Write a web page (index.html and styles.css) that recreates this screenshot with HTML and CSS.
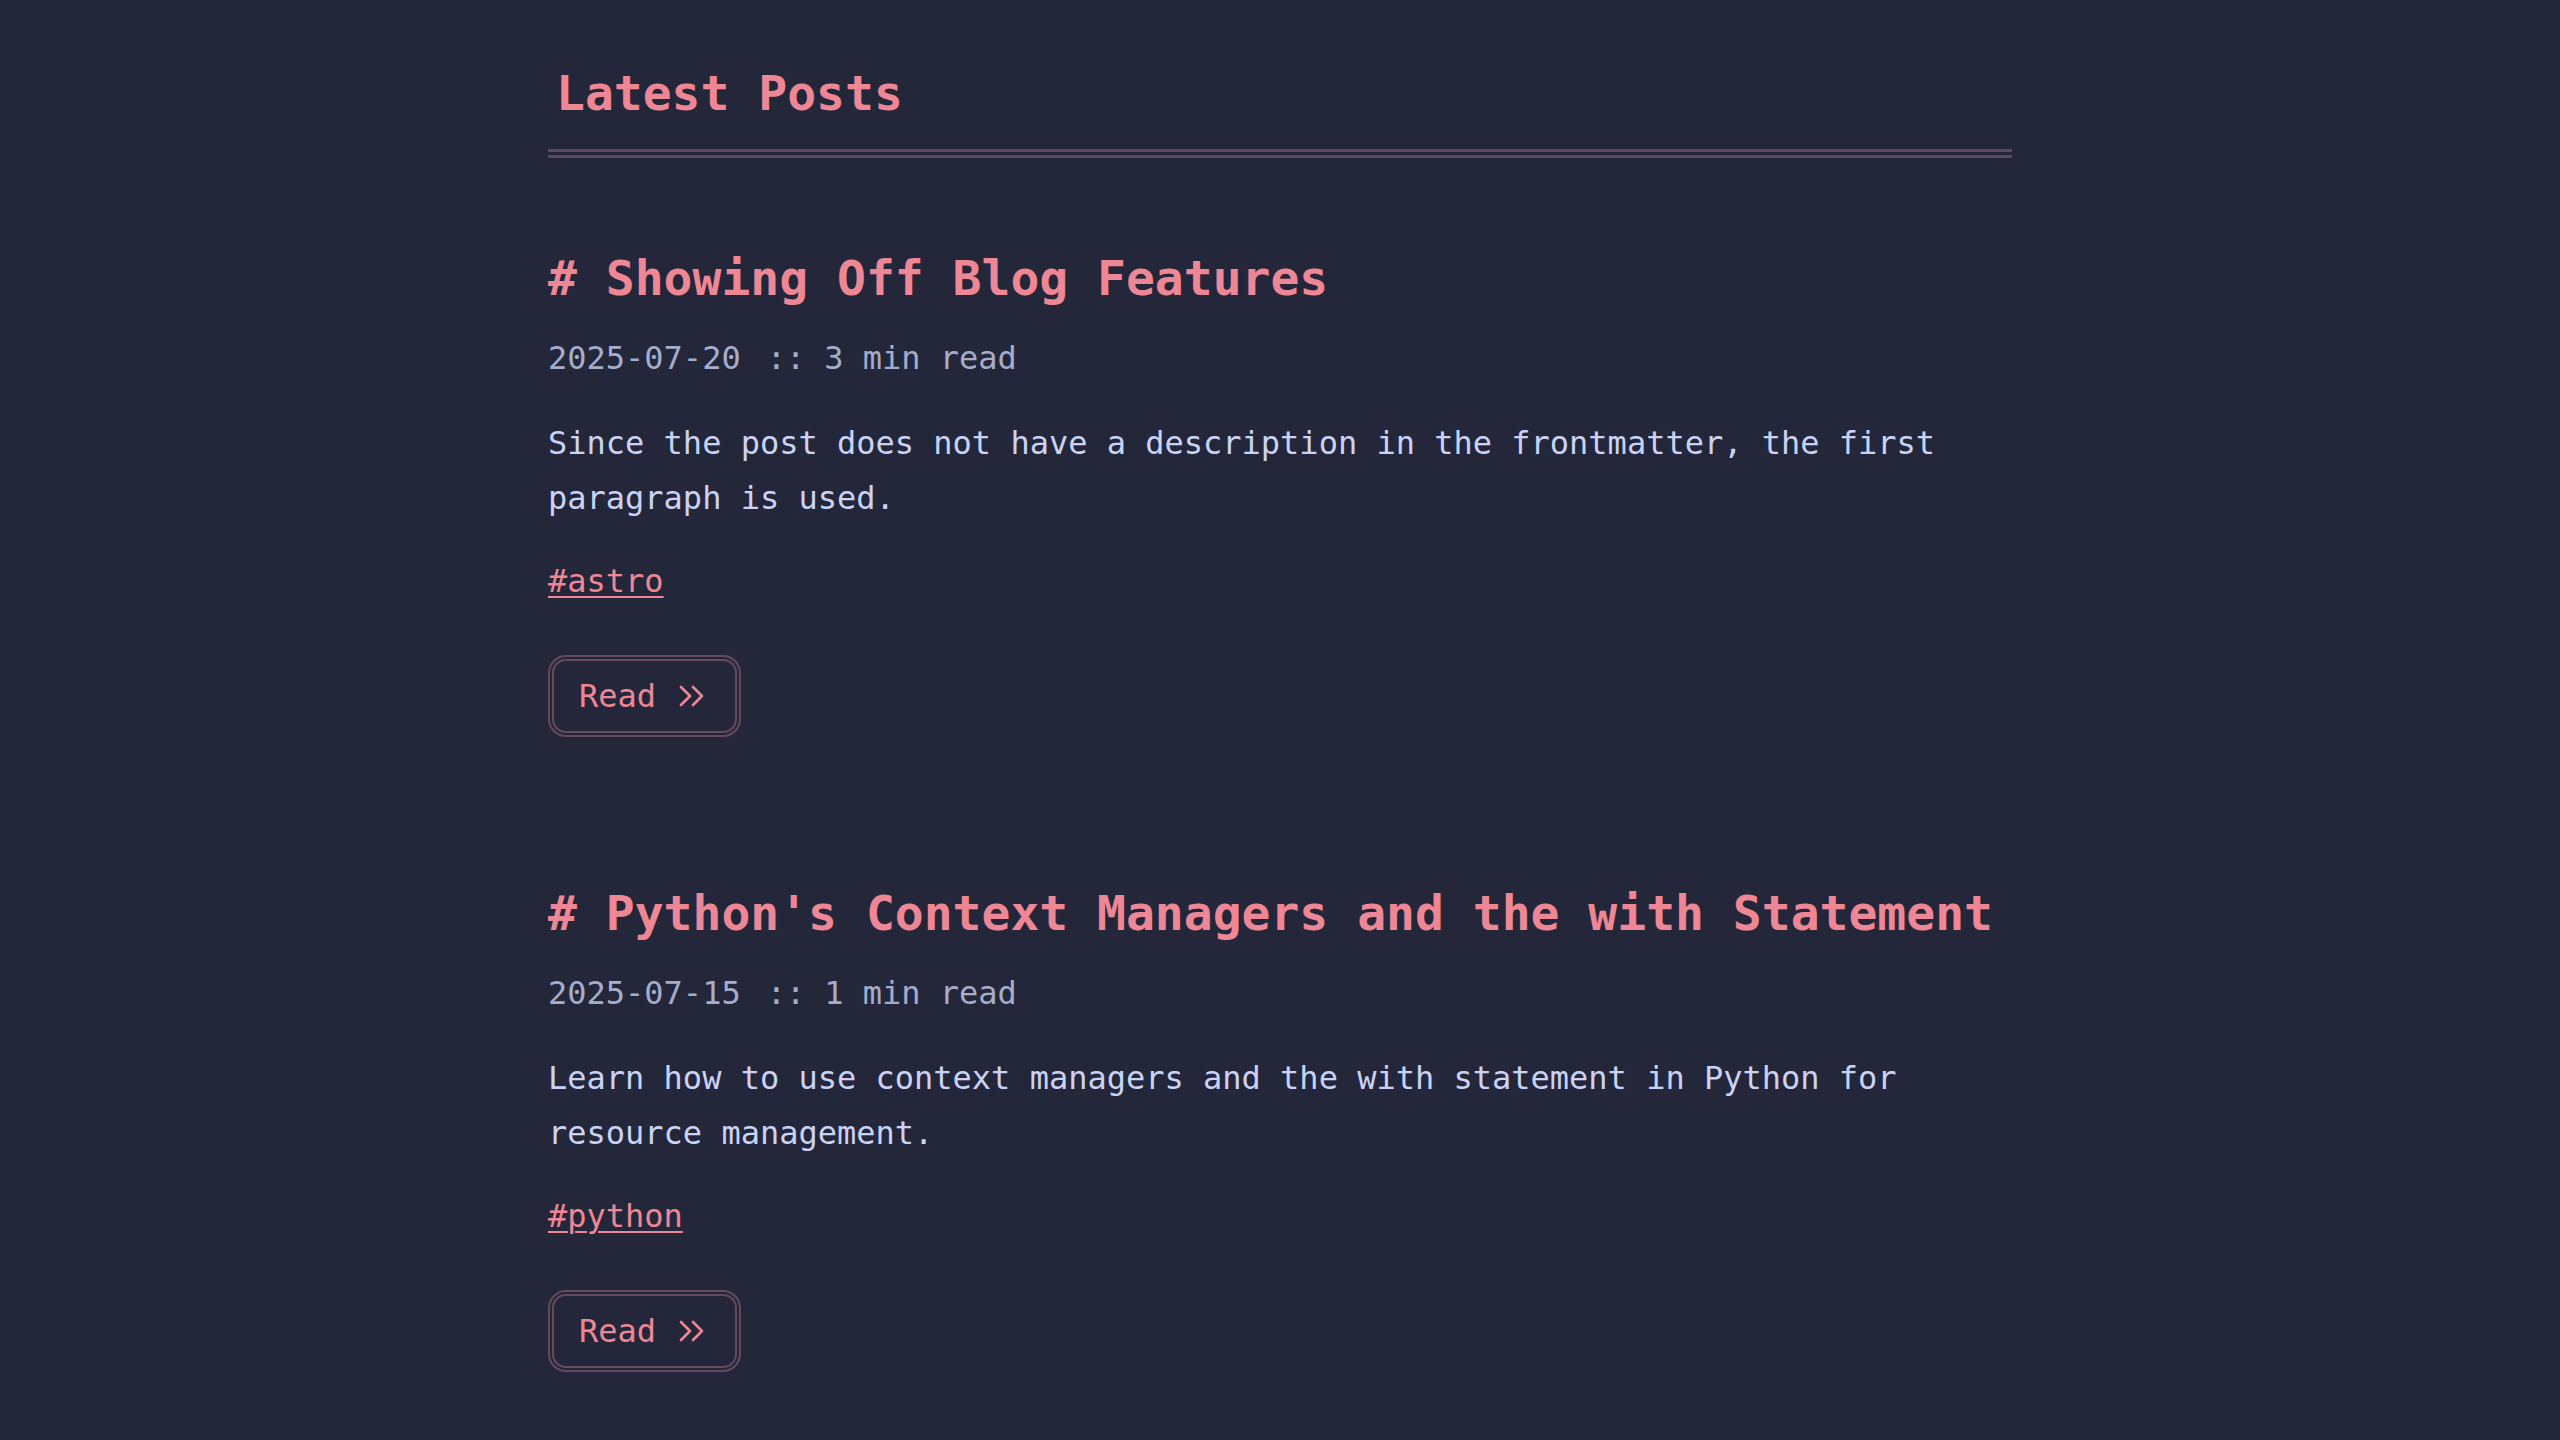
FILE: index.html
```html
<!DOCTYPE html>
<html lang="en">
<head>
<meta charset="utf-8">
<title>Latest Posts</title>
<link rel="stylesheet" href="styles.css">
</head>
<body>
<main class="page">
  <h1 class="page-title">Latest Posts</h1>
  <section class="posts">
    <article class="post">
      <h2 class="post-title"># Showing Off Blog Features</h2>
      <div class="post-meta"><span class="post-date">2025-07-20</span><span class="sep">::</span>3 min read</div>
      <p class="post-desc">Since the post does not have a description in the frontmatter, the first paragraph is used.</p>
      <div class="post-tags"><a class="tag" href="#">#astro</a></div>
      <a class="read-btn" href="#">
        <span>Read</span>
        <svg class="chev" width="28" height="22" viewBox="0 0 28 22" fill="none" stroke="currentColor" stroke-width="2.6" stroke-linecap="round" stroke-linejoin="round"><path d="M3 2l9 9-9 9"/><path d="M15 2l9 9-9 9"/></svg>
      </a>
    </article>
    <article class="post">
      <h2 class="post-title"># Python's Context Managers and the with Statement</h2>
      <div class="post-meta"><span class="post-date">2025-07-15</span><span class="sep">::</span>1 min read</div>
      <p class="post-desc">Learn how to use context managers and the with statement in Python for resource management.</p>
      <div class="post-tags"><a class="tag" href="#">#python</a></div>
      <a class="read-btn" href="#">
        <span>Read</span>
        <svg class="chev" width="28" height="22" viewBox="0 0 28 22" fill="none" stroke="currentColor" stroke-width="2.6" stroke-linecap="round" stroke-linejoin="round"><path d="M3 2l9 9-9 9"/><path d="M15 2l9 9-9 9"/></svg>
      </a>
    </article>
  </section>
</main>
</body>
</html>
```
FILE: styles.css
```css
html, body {
  margin: 0;
  padding: 0;
  background: #24273a;
}
body {
  font-family: "DejaVu Sans Mono", "Liberation Mono", monospace;
  font-size: 32px;
  line-height: 54px;
  color: #cad3f5;
  min-height: 1440px;
}
.page {
  width: 1464px;
  margin: 0 auto;
  padding-top: 64px;
}
.page-title {
  margin: 0;
  font-size: 48px;
  line-height: 58px;
  font-weight: bold;
  color: #ed8796;
  padding: 0 0 27px 8px;
  border-bottom: 9px double #5d4a5f;
}
.posts {
  display: flex;
  flex-direction: column;
  gap: 145px;
  padding-top: 89px;
}
.post {
  display: flex;
  flex-direction: column;
  align-items: flex-start;
}
.post-title {
  margin: 0;
  font-size: 48px;
  line-height: 62px;
  font-weight: bold;
  color: #ed8796;
}
.post-meta {
  margin-top: 22px;
  color: #a5adcb;
}
.sep {
  margin: 0 19px 0 26px;
}
.post-desc {
  margin: 31px 0 0;
  line-height: 55px;
}
.post-tags {
  margin-top: 28px;
}
.tag {
  color: #ed8796;
  text-decoration: underline;
  text-decoration-thickness: 2px;
  text-underline-offset: 4px;
}
.read-btn {
  margin-top: 47px;
  display: inline-flex;
  align-items: center;
  gap: 22px;
  padding: 8px 29px 8px 25px;
  border: 6px double #644a5f;
  border-radius: 18px;
  color: #ed8796;
  text-decoration: none;
}
.chev {
  display: block;
}
```
